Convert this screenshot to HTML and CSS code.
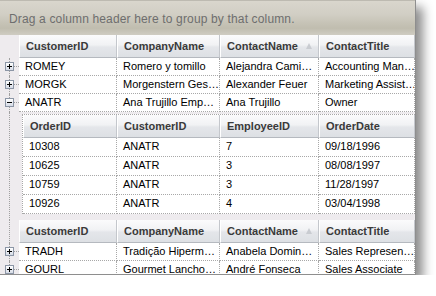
FILE: index.html
```html
<!DOCTYPE html>
<html>
<head>
<meta charset="utf-8">
<link rel="stylesheet" href="styles.css">
</head>
<body>
<div class="grid">
  <div class="group-panel">Drag a column header here to group by that column.</div>
  <div class="body">
    <div class="row head">
      <div class="ind"></div>
      <div class="hc">CustomerID</div>
      <div class="hc">CompanyName</div>
      <div class="hc sort">ContactName<span class="arrow"></span></div>
      <div class="hc">ContactTitle</div>
    </div>
    <div class="row">
      <div class="ind tree"><span class="exp"><span class="h"></span><span class="v"></span></span></div>
      <div class="c">ROMEY</div><div class="c">Romero y tomillo</div><div class="c">Alejandra Cami…</div><div class="c">Accounting Man…</div>
    </div>
    <div class="row">
      <div class="ind tree"><span class="exp"><span class="h"></span><span class="v"></span></span></div>
      <div class="c">MORGK</div><div class="c">Morgenstern Ges…</div><div class="c">Alexander Feuer</div><div class="c">Marketing Assist…</div>
    </div>
    <div class="row">
      <div class="ind tree"><span class="exp"><span class="h"></span></span></div>
      <div class="c">ANATR</div><div class="c">Ana Trujillo Emp…</div><div class="c">Ana Trujillo</div><div class="c">Owner</div>
    </div>
    <div class="detail">
      <div class="ind tree full"></div>
      <div class="child-wrap">
        <div class="child">
          <div class="crow head">
            <div class="hc">OrderID</div>
            <div class="hc">CustomerID</div>
            <div class="hc">EmployeeID</div>
            <div class="hc">OrderDate</div>
          </div>
          <div class="crow"><div class="c">10308</div><div class="c">ANATR</div><div class="c">7</div><div class="c">09/18/1996</div></div>
          <div class="crow"><div class="c">10625</div><div class="c">ANATR</div><div class="c">3</div><div class="c">08/08/1997</div></div>
          <div class="crow"><div class="c">10759</div><div class="c">ANATR</div><div class="c">3</div><div class="c">11/28/1997</div></div>
          <div class="crow"><div class="c">10926</div><div class="c">ANATR</div><div class="c">4</div><div class="c">03/04/1998</div></div>
        </div>
      </div>
    </div>
    <div class="row head">
      <div class="ind tree full"></div>
      <div class="hc">CustomerID</div>
      <div class="hc">CompanyName</div>
      <div class="hc sort">ContactName<span class="arrow"></span></div>
      <div class="hc">ContactTitle</div>
    </div>
    <div class="row">
      <div class="ind tree"><span class="exp"><span class="h"></span><span class="v"></span></span></div>
      <div class="c">TRADH</div><div class="c">Tradição Hiperm…</div><div class="c">Anabela Domin…</div><div class="c">Sales Represen…</div>
    </div>
    <div class="row">
      <div class="ind tree"><span class="exp"><span class="h"></span><span class="v"></span></span></div>
      <div class="c">GOURL</div><div class="c">Gourmet Lancho…</div><div class="c">André Fonseca</div><div class="c">Sales Associate</div>
    </div>
  </div>
</div>
</body>
</html>
```
FILE: styles.css
```css
* { box-sizing: border-box; }
html, body { margin: 0; padding: 0; background: #ffffff; }
body {
  font-family: "Liberation Sans", Arial, sans-serif;
  font-size: 11px;
  color: #000;
}
.grid {
  width: 416px;
  height: 275px;
  overflow: hidden;
  border-right: 1px solid #8e8e8e;
  border-bottom: 1px solid #8e8e8e;
  box-shadow: 7px 7px 10px rgba(0, 0, 0, 0.45);
  display: flex;
  flex-direction: column;
}
.group-panel {
  height: 35px;
  flex: none;
  padding: 11px 0 0 9px;
  color: #6e6e6e;
  font-size: 12px;
  letter-spacing: 0.15px;
  border-top: 1px solid #bdbab1;
  background: linear-gradient(#d9d6cd 0%, #d1cec4 40%, #c6c3b6 65%, #c0bdaf 80%, #cfccc2 100%);
}
.body {
  flex: 1;
  min-height: 0;
  overflow: hidden;
  background: #eeebee;
  display: flex;
  flex-direction: column;
}
.row {
  display: grid;
  grid-template-columns: 19px 98px 103px 99px 96px;
  height: 18px;
  flex: none;
}
.row.head { height: 23px; }
.ind { position: relative; background: #eeebee; }
.c {
  background: #fff;
  padding: 0 0 0 6px;
  line-height: 16px;
  white-space: nowrap;
  overflow: hidden;
  border-right: 1px dotted #a8a8a8;
  border-bottom: 1px dotted #a8a8a8;
}
.hc {
  position: relative;
  font-weight: bold;
  font-size: 11px;
  color: #3a3a3a;
  padding: 0 0 0 6px;
  line-height: 22px;
  white-space: nowrap;
  overflow: hidden;
  background: linear-gradient(#fbfbfc 0%, #f1f2f4 45%, #e4e6ea 55%, #dde0e4 100%);
  border-left: 1px solid #ffffff;
  border-right: 1px solid #c4c7cc;
  border-bottom: 1px solid #b5b9bf;
}
.arrow {
  position: absolute;
  right: 6px;
  top: 8px;
  width: 0;
  height: 0;
  border-left: 3.5px solid transparent;
  border-right: 3.5px solid transparent;
  border-bottom: 6px solid #c9ccd1;
}
.tree::before {
  content: "";
  position: absolute;
  left: 9px;
  top: 0;
  bottom: 0;
  border-left: 1px dotted #a0a0a0;
}
.tree::after {
  content: "";
  position: absolute;
  left: 14px;
  right: 0;
  top: 8px;
  border-top: 1px dotted #a0a0a0;
}
.tree.full::after { display: none; }
.exp {
  position: absolute;
  left: 5px;
  top: 4px;
  width: 9px;
  height: 9px;
  border: 1px solid #8c96a6;
  background: linear-gradient(#ffffff, #d6dbe6);
  z-index: 1;
}
.exp .h {
  position: absolute;
  left: 1px;
  top: 3px;
  width: 5px;
  height: 1px;
  background: #000;
}
.exp .v {
  position: absolute;
  left: 3px;
  top: 1px;
  width: 1px;
  height: 5px;
  background: #000;
}
.detail {
  display: grid;
  grid-template-columns: 19px 396px;
  flex: none;
}
.child-wrap {
  padding: 2px 0 6px 3px;
  background: #eeebee;
}
.child {
  border-left: 1px dotted #a8a8a8;
  border-top: 1px dotted #a8a8a8;
  background: #fff;
}
.crow {
  display: grid;
  grid-template-columns: 94px 103px 99px 96px;
  height: 19px;
}
.crow .c { line-height: 17px; }
.crow.head { height: 23px; }
```
